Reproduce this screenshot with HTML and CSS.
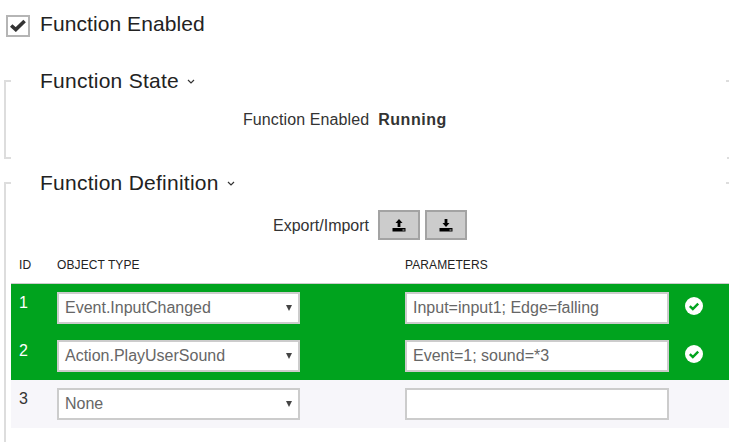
FILE: index.html
```html
<!DOCTYPE html>
<html lang="en">
<head>
<meta charset="utf-8">
<title>Function</title>
<link rel="stylesheet" href="styles.css">
</head>
<body>
<div class="enable">
  <span class="checkbox"><svg width="16" height="13" viewBox="0 0 16 13"><path d="M1.2 6.5 L5.8 10.6 L14.6 2" fill="none" stroke="#333" stroke-width="3.6"/></svg></span>
  <span class="enable-label">Function Enabled</span>
</div>
<section class="group group-state">
  <h2 class="group-title">Function State <svg class="chev" width="8" height="5" viewBox="0 0 8 5"><path d="M1 1 L4 4 L7 1" fill="none" stroke="#333" stroke-width="1.2"/></svg></h2>
  <div class="state-row"><span class="state-label">Function Enabled</span><strong class="state-value">Running</strong></div>
</section>
<section class="group group-def">
  <h2 class="group-title">Function Definition <svg class="chev" width="8" height="5" viewBox="0 0 8 5"><path d="M1 1 L4 4 L7 1" fill="none" stroke="#333" stroke-width="1.2"/></svg></h2>
  <div class="export-row">
    <span class="export-label">Export/Import</span>
    <button class="icon-btn" type="button"><svg width="14" height="14" viewBox="0 0 14 14"><path d="M7 1 L10.5 5 H8.4 V9 H5.6 V5 H3.5 Z M0.5 10 H13.5 V13.5 H0.5 Z" fill="#000"/><rect x="10.5" y="11.5" width="2" height="1" fill="#ccc"/></svg></button>
    <button class="icon-btn" type="button"><svg width="14" height="14" viewBox="0 0 14 14"><path d="M5.6 1 H8.4 V5 H10.5 L7 9 L3.5 5 H5.6 Z M0.5 10 H13.5 V13.5 H0.5 Z" fill="#000"/><rect x="10.5" y="11.5" width="2" height="1" fill="#ccc"/></svg></button>
  </div>
  <div class="table-head">
    <span>ID</span><span>OBJECT TYPE</span><span>PARAMETERS</span>
  </div>
  <div class="row row-ok">
    <span class="cell-id">1</span>
    <div class="field select"><span>Event.InputChanged</span><i class="caret"></i></div>
    <div class="field field-param">Input=input1; Edge=falling</div>
    <svg class="ok" width="18" height="18" viewBox="0 0 18 18"><circle cx="9" cy="9" r="9" fill="#fff"/><path d="M4.8 9.2 L7.8 12 L13.2 6.6" fill="none" stroke="#00a31e" stroke-width="2.4"/></svg>
  </div>
  <div class="row row-ok">
    <span class="cell-id">2</span>
    <div class="field select"><span>Action.PlayUserSound</span><i class="caret"></i></div>
    <div class="field field-param">Event=1; sound=*3</div>
    <svg class="ok" width="18" height="18" viewBox="0 0 18 18"><circle cx="9" cy="9" r="9" fill="#fff"/><path d="M4.8 9.2 L7.8 12 L13.2 6.6" fill="none" stroke="#00a31e" stroke-width="2.4"/></svg>
  </div>
  <div class="row row-empty">
    <span class="cell-id">3</span>
    <div class="field select"><span>None</span><i class="caret"></i></div>
    <div class="field field-param"></div>
  </div>
</section>
</body>
</html>
```

FILE: styles.css
```css
* { box-sizing: border-box; }
html, body { margin: 0; padding: 0; }
body {
  width: 729px;
  height: 442px;
  overflow: hidden;
  background: #fff;
  font-family: "Liberation Sans", Arial, sans-serif;
  color: #333;
}
.enable {
  display: flex;
  align-items: center;
  height: 37px;
  padding: 9px 0 0 6px;
  gap: 10px;
}
.checkbox {
  width: 24px;
  height: 22px;
  margin-top: 5px;
  border: 2px solid #b5b5b5;
  display: flex;
  align-items: center;
  justify-content: center;
}
.enable-label {
  font-size: 21px;
  line-height: 24px;
  letter-spacing: 0.08px;
  color: #222;
  margin-top: 1px;
}
.group {
  position: relative;
  margin-left: 4px;
  border-left: 2px solid #ddd;
}
.group::before, .group::after {
  content: "";
  position: absolute;
  top: 0;
  height: 2px;
  background: #ddd;
}
.group::before { left: 0; width: 5px; }
.group::after { right: 0; width: 3px; }
.group-state {
  margin-top: 43px;
  height: 79px;
  border-bottom: 2px solid #ddd;
  border-image: linear-gradient(to right, #ddd 7px, transparent 7px, transparent 721px, #ddd 721px) 2;
}
.group-def { margin-top: 23px; height: 261px; }
.group-title {
  margin: 0;
  position: relative;
  top: -11px;
  padding-left: 34px;
  font-size: 21px;
  line-height: 24px;
  letter-spacing: 0.25px;
  font-weight: 400;
  color: #222;
  height: 24px;
}
.chev { vertical-align: 4px; margin-left: 2px; }
.state-row {
  display: flex;
  gap: 9px;
  margin-top: 7px;
  padding-left: 237px;
  align-items: baseline;
  font-size: 16px;
}
.state-label { letter-spacing: 0.1px; }
.state-value { font-size: 16px; letter-spacing: 0.55px; color: #333; }
.export-row {
  display: flex;
  align-items: center;
  margin-top: 4px;
  padding-left: 267px;
  height: 30px;
  font-size: 16px;
}
.export-label { margin: 2px 9px 0 0; }
.icon-btn {
  width: 42px;
  height: 30px;
  margin: 0 5px 0 0;
  padding: 0;
  background: #ccc;
  border: 2px solid #a3a3a3;
  display: flex;
  align-items: center;
  justify-content: center;
}
.table-head {
  display: grid;
  grid-template-columns: 38px 348px 1fr;
  align-items: center;
  height: 44px;
  margin-left: 5px;
  padding: 7px 0 0 8px;
  font-size: 12px;
  letter-spacing: 0.1px;
  color: #222;
  border-bottom: 1px solid #ccc;
}
.row {
  display: grid;
  grid-template-columns: 41px 243px 369px 50px;
  height: 48px;
  margin-left: 5px;
  padding: 8px 0 0 5px;
  font-size: 16px;
}
.row-ok { background: #00a31e; color: #fff; }
.row-empty { background: #f7f6fa; }
.cell-id { padding-left: 3px; padding-top: 2px; line-height: 18px; }
.field {
  height: 32px;
  background: #fff;
  border: 2px solid #ccc;
  color: #666;
  font-size: 16px;
  line-height: 28px;
  padding-left: 6px;
  white-space: nowrap;
}
.field-param { margin-left: 105px; width: 264px; }
.select {
  display: flex;
  justify-content: space-between;
  align-items: center;
  padding-right: 6px;
}
.caret {
  width: 0;
  height: 0;
  border-left: 3px solid transparent;
  border-right: 3px solid transparent;
  border-top: 6px solid #444;
}
.ok { margin: 5px 0 0 16px; }
```
